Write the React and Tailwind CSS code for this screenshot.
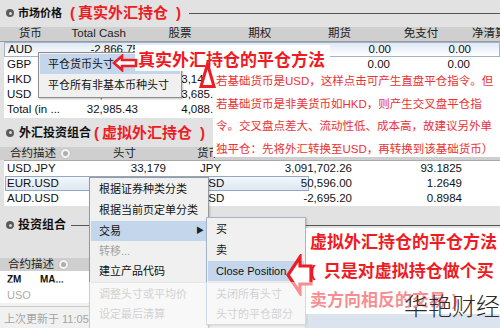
const FONT = "font-['Liberation_Sans','Noto_Sans_CJK_SC',sans-serif]";

function Dot() {
  return (
    <span className="w-[8px] h-[8px] rounded-full bg-[#5a5a5a] flex items-center justify-center shrink-0">
      <span className="w-[3px] h-[3px] rounded-full bg-[#d8d8d8]" />
    </span>
  );
}

function HeadIcon() {
  return (
    <span className="w-[9px] h-[9px] rounded-full border-[2px] border-[#f4f4f4] bg-[#adadad] ring-1 ring-[#c4c4c4] shrink-0" />
  );
}

const W1 = ["w-[58px]", "w-[79px]", "w-[88px]", "w-[76px]", "w-[88px]", "w-[80px]", "w-[80px]"];

function Row1({ cells, className = "" }) {
  return (
    <div className={"flex h-[15px] items-center text-[11.5px] text-[#111] " + className}>
      <div className={W1[0] + " pl-[3px] whitespace-nowrap overflow-hidden shrink-0"}>{cells[0]}</div>
      {cells.slice(1).map((c, i) => (
        <div key={i} className={W1[i + 1] + " pr-[3px] text-right whitespace-nowrap shrink-0"}>{c}</div>
      ))}
    </div>
  );
}

function Row2({ cells, selected }) {
  return (
    <div className="relative flex h-[15px] items-center text-[11.5px] text-[#111]">
      {selected && (
        <span className="absolute left-[1px] top-0 w-[304px] h-[15px] border border-[#93a8c2] bg-gradient-to-b from-[#f4f7fb] to-[#dde7f3]" />
      )}
      <div className="relative w-[86px] pl-[3px] shrink-0 whitespace-nowrap">{cells[0]}</div>
      <div className="relative w-[80px] pr-[4px] text-right shrink-0">{cells[1]}</div>
      <div className="relative w-[90px] pl-[30px] shrink-0">{cells[2]}</div>
      <div className="relative w-[96px] pr-[4px] text-right shrink-0">{cells[3]}</div>
      <div className="relative w-[110px] pr-[4px] text-right shrink-0">{cells[4]}</div>
    </div>
  );
}

function MenuItem({ children, h = "h-[20px]", hl, disabled, arrow }) {
  return (
    <div
      className={
        "relative flex items-center pl-[8px] text-[11px] whitespace-nowrap " +
        h +
        (hl ? " bg-[#c4d6ec]" : "") +
        (disabled ? " text-[#a2a2a2]" : " text-[#111]")
      }
    >
      {children}
      {arrow && <span className="absolute right-[3px] text-[8px] text-[#222]">▶</span>}
    </div>
  );
}

export default function App() {
  return (
    <div className={"relative w-[500px] h-[328px] overflow-hidden bg-[#e2e2e2] " + FONT}>
      {/* Section 1 */}
      <section className="flex flex-col">
        <div className="h-[27px] flex items-center pl-[6px] pb-[1px]">
          <Dot />
          <span className="ml-[4px] text-[11px] font-bold text-[#111]">市场价格</span>
          <span className="ml-[8px] flex items-center text-[15px] font-bold text-[#ee1c24]">
            <span>(</span>
            <span className="ml-[3px]">真实外汇持仓</span>
            <span className="ml-[8px]">)</span>
          </span>
          <div className="ml-[8px] flex-1 h-px bg-[#555]" />
        </div>
        <div className="h-[15px] flex items-center bg-[#cfcfcf] text-[11.5px] text-[#222] border-b border-[#9a9a9a]">
          <div className="w-[62px] text-center">货币</div>
          <div className="w-[79px] text-center">Total Cash</div>
          <div className="w-[88px] text-center">股票</div>
          <div className="w-[76px] text-center">期权</div>
          <div className="w-[88px] text-center">期货</div>
          <div className="w-[80px] text-center">免支付</div>
          <div className="w-[40px] pl-[12px] whitespace-nowrap">净清算</div>
        </div>
        <div className="ml-[4px] bg-white flex flex-col">
          <Row1
            className="border border-[#9fb3cc] bg-gradient-to-b from-[#dfe9f6] to-white h-[14px]"
            cells={["AUD", "-2,866.75", "4,412.00", "0.00", "0.00", "0.00", "1,545"]}
          />
          <Row1 cells={["GBP", "1,120.34", "0.00", "0.00", "0.00", "0.00", "1,120"]} />
          <Row1 cells={["HKD", "-1,858.12", "3,140.00", "0.00", "0.00", "0.00", "1,281"]} />
          <Row1 cells={["USD", "35,590.96", "3,685.00", "0.00", "0.00", "0.00", "39,275"]} />
          <Row1 className="h-[16px]" cells={["Total (in ...", "32,985.43", "4,088.52", "0.00", "0.00", "0.00", "37,073"]} />
        </div>
      </section>

      {/* Section 2 */}
      <section className="flex flex-col">
        <div className="h-[29px] flex items-end pb-[3px] pl-[6px]">
          <div className="flex items-center">
            <Dot />
            <span className="ml-[5px] text-[12px] font-bold text-[#111]">外汇投资组合</span>
            <span className="ml-[3px] flex items-center text-[15px] font-bold text-[#ee1c24]">
              <span>(</span>
              <span className="ml-[3px]">虚拟外汇持仓</span>
              <span className="ml-[8px]">)</span>
            </span>
          </div>
        </div>
        <div className="h-[13px] flex items-center bg-[#cfcfcf] text-[11.5px] text-[#222]">
          <div className="w-[90px] pl-[10px] flex items-center gap-[5px]">
            <span>合约描述</span>
            <HeadIcon />
          </div>
          <div className="w-[80px] pl-[23px]">头寸</div>
          <div className="w-[90px] pl-[27px]">货币</div>
        </div>
        <div className="ml-[4px] bg-white border-t border-[#a8a8a8] flex flex-col">
          <Row2 cells={["USD.JPY", "33,179", "JPY", "3,091,702.26", "93.1825"]} />
          <Row2 selected cells={["EUR.USD", "40,000", "USD", "50,596.00", "1.2649"]} />
          <Row2 cells={["AUD.USD", "-3,000", "USD", "-2,695.20", "0.8984"]} />
        </div>
        <div className="h-[12px]" />
      </section>

      {/* Section 3 */}
      <section className="flex flex-col">
        <div className="h-[14px] flex items-center pl-[6px]">
          <Dot />
          <span className="ml-[4px] text-[12px] font-bold text-[#111]">投资组合</span>
          <div className="ml-[5px] flex-1 h-px bg-[#555]" />
        </div>
        <div className="h-[26px]" />
        <div className="h-[13px] flex items-center bg-[#cfcfcf] text-[11.5px] text-[#222] pl-[8px] gap-[5px]">
          <span>合约描述</span>
          <HeadIcon />
        </div>
        <div className="h-[32px] bg-white flex flex-col">
          <div className="h-[16px] flex items-center text-[10px] font-bold text-[#111] pl-[7px]">
            <span className="w-[33px]">ZM</span>
            <span>MA...</span>
          </div>
          <div className="h-[16px] flex items-center text-[11px] text-[#555] pl-[7px]">USO</div>
        </div>
        <div className="h-[3px]" />
        <div className="h-[22px] flex border-t border-[#909090]">
          <div className="w-[305px] flex items-center pt-[3px] pl-[4px] text-[11px] text-[#444] whitespace-nowrap">
            上次更新于 11:05
          </div>
          <div className="flex-1 bg-[#b4c6dc]" />
        </div>
      </section>

      {/* ===== overlays ===== */}
      {/* menu 1 */}
      <div className="absolute left-[38px] top-[52px] w-[144px] h-[46px] bg-[#f0f0f0] border border-[#8e8e8e] p-[1px] shadow-[1px_1px_2px_rgba(0,0,0,0.25)]">
        <MenuItem hl>平仓货币头寸</MenuItem>
        <div className="h-[1px]" />
        <MenuItem>平仓所有非基本币种头寸</MenuItem>
      </div>

      {/* annotation A */}
      <div className="absolute left-[135px] top-[45px] w-[195px] h-[26px] bg-white flex items-center pt-[6px] pl-[3px] text-[17px] font-bold text-[#ef1a22] whitespace-nowrap">
        真实外汇持仓的平仓方法
      </div>
      <svg className="absolute left-[112px] top-[54px]" width="26" height="18" viewBox="0 0 26 18">
        <polygon points="2,9 10,2 10,6 24,6 24,12 10,12 10,16" fill="#fff" stroke="#ee1c24" strokeWidth="2.6" strokeLinejoin="miter" />
      </svg>

      {/* annotation B */}
      <div className="absolute left-[213px] top-[70px] w-[287px] h-[87px] bg-white pl-[3px] text-[11.5px] leading-[22.5px] text-[#ec3136] whitespace-nowrap overflow-hidden">
        <div>若基础货币是USD，这样点击可产生直盘平仓指令。但</div>
        <div>若基础货币是非美货币如HKD，则产生交叉盘平仓指</div>
        <div>令。交叉盘点差大、流动性低、成本高，故建议另外单</div>
        <div>独平仓：先将外汇转换至USD，再转换到该基础货币）</div>
      </div>
      <svg className="absolute left-[199px] top-[62px]" width="17" height="27" viewBox="0 0 17 27">
        <polygon points="8.5,2 15,24.5 2,24.5" fill="#fff" stroke="#ee1c24" strokeWidth="3" />
      </svg>

      {/* menu 2 */}
      <div className="absolute left-[89px] top-[177px] w-[120px] h-[160px] bg-[#f0f0f0] border border-[#9a9a9a] p-[1px] shadow-[1px_1px_2px_rgba(0,0,0,0.2)]">
        <MenuItem h="h-[21px]">根据证券种类分类</MenuItem>
        <MenuItem h="h-[21px]">根据当前页定单分类</MenuItem>
        <MenuItem hl arrow>交易</MenuItem>
        <MenuItem disabled>转移...</MenuItem>
        <MenuItem>建立产品代码</MenuItem>
        <div className="my-[1px] h-px bg-[#cdcdcd]" />
        <MenuItem disabled>调整头寸或平均价</MenuItem>
        <MenuItem disabled>设定最后清算</MenuItem>
      </div>

      {/* submenu */}
      <div className="absolute left-[206px] top-[217px] w-[100px] h-[108px] bg-[#f0f0f0] border border-[#a4b4cc] p-[1px] shadow-[1px_1px_2px_rgba(0,0,0,0.2)]">
        <MenuItem h="h-[21px]">买</MenuItem>
        <MenuItem h="h-[21px]">卖</MenuItem>
        <MenuItem hl>Close Position</MenuItem>
        <div className="my-[1px] h-px bg-[#cdcdcd]" />
        <MenuItem disabled>关闭所有头寸</MenuItem>
        <MenuItem disabled>头寸的平仓部分</MenuItem>
      </div>

      {/* annotation C */}
      <div className="absolute left-[306px] top-[228px] w-[194px] h-[86px] bg-white pl-[4px] text-[17px] font-bold leading-[29px] text-[#ef1a22] whitespace-nowrap overflow-hidden">
        <div>虚拟外汇持仓的平仓方法</div>
        <div className="flex">
          <span>(</span>
          <span className="ml-[8px]">只是对虚拟持仓做个买</span>
        </div>
        <div className="flex">
          <span>卖方向相反的交易</span>
          <span className="ml-[6px]">)</span>
        </div>
      </div>
      <svg className="absolute left-[285px] top-[254px]" width="28" height="42" viewBox="0 0 28 42">
        <polygon points="3,21 15,3 15,12 26,12 26,30 15,30 15,39" fill="#fff" stroke="#ee1c24" strokeWidth="3.2" />
      </svg>

      {/* fade band */}
      <div className="absolute left-0 top-[282px] w-[500px] h-[46px] bg-white/50" />

      {/* watermark */}
      <div className="absolute left-[404px] top-[292px] text-[24px] leading-[30px] font-light text-[#2b2b2b] whitespace-nowrap">
        华艳财经
      </div>
    </div>
  );
}
